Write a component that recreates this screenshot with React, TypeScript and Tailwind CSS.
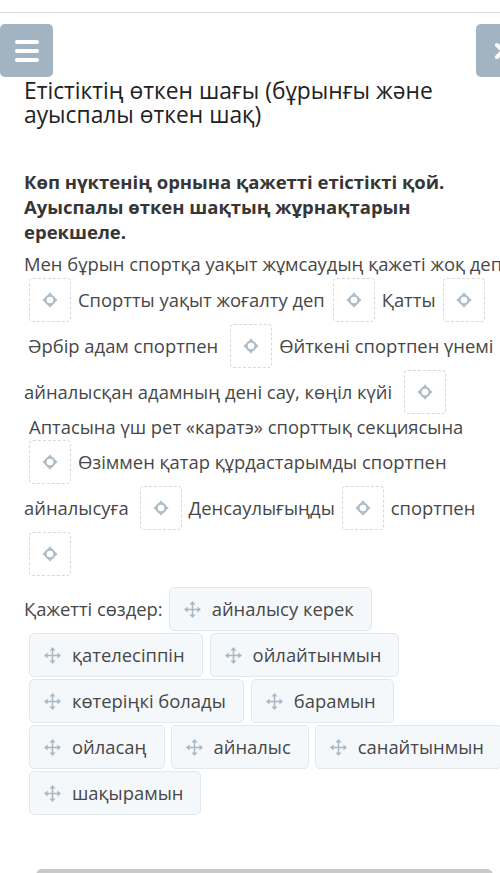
import React from 'react';

const MoveIcon = () => (
  <svg width="17" height="17" viewBox="0 0 17 17" fill="#a9b8c4">
    <rect x="7.75" y="3" width="1.5" height="11" />
    <rect x="3" y="7.75" width="11" height="1.5" />
    <polygon points="8.5,0 11.6,3.6 5.4,3.6" />
    <polygon points="8.5,17 11.6,13.4 5.4,13.4" />
    <polygon points="0,8.5 3.6,5.4 3.6,11.6" />
    <polygon points="17,8.5 13.4,5.4 13.4,11.6" />
  </svg>
);

const TargetIcon = () => (
  <svg width="16" height="16" viewBox="0 0 16 16" fill="#aebdc8">
    <circle cx="8" cy="8" r="4.4" fill="none" stroke="#aebdc8" strokeWidth="2.2" />
    <polygon points="8,0.3 10.6,3.4 5.4,3.4" />
    <polygon points="8,15.7 10.6,12.6 5.4,12.6" />
    <polygon points="0.3,8 3.4,5.4 3.4,10.6" />
    <polygon points="15.7,8 12.6,5.4 12.6,10.6" />
  </svg>
);

const Drop = ({ className = '' }: { className?: string }) => (
  <div
    className={`shrink-0 w-[42px] h-[44px] border border-dashed border-[#d8d8d8] rounded-[4px] flex items-center justify-center ${className}`}
  >
    <TargetIcon />
  </div>
);

const Txt = ({ children, className = '' }: { children: React.ReactNode; className?: string }) => (
  <span className={`shrink-0 whitespace-nowrap ${className}`}>{children}</span>
);

const Chip = ({ word, className = '' }: { word: string; className?: string }) => (
  <div
    className={`shrink-0 h-[44px] flex items-center gap-[11px] pl-[14px] pr-[17px] bg-[#f5f8fb] border border-[#e1e7ec] rounded-[5px] whitespace-nowrap ${className}`}
  >
    <MoveIcon />
    <span>{word}</span>
  </div>
);

const Row = ({ children, h = 'h-[46px]' }: { children: React.ReactNode; h?: string }) => (
  <div className={`flex items-center ${h}`}>{children}</div>
);

export default function App() {
  return (
    <div className="w-[500px] h-[873px] overflow-hidden bg-white font-['Open_Sans',sans-serif]">
      <div className="h-[13px] border-b border-[#dcdcdc]" />

      <div className="flex justify-between mt-[11px]">
        <button className="w-[53px] h-[53px] rounded-[5px] bg-[#a2b4c2] flex flex-col items-center justify-center gap-[5px]">
          <span className="block w-[24px] h-[4px] rounded-full bg-white" />
          <span className="block w-[24px] h-[4px] rounded-full bg-white" />
          <span className="block w-[24px] h-[4px] rounded-full bg-white" />
        </button>
        <button className="w-[53px] h-[53px] -mr-[29px] rounded-[5px] bg-[#a2b4c2] flex items-center justify-center">
          <svg width="18" height="18" viewBox="0 0 18 18">
            <path d="M3 3 L15 15 M15 3 L3 15" stroke="white" strokeWidth="4" strokeLinecap="round" />
          </svg>
        </button>
      </div>

      <div className="pl-[24px]">
        <h1 className="mt-[2px] text-[22.8px] leading-[24px] text-[#222] font-normal">
          Етістіктің өткен шағы (бұрынғы және ауыспалы өткен шақ)
        </h1>

        <p className="mt-[42px] text-[18.5px] leading-[25px] font-bold text-[#363636] pr-[30px]">
          Көп нүктенің орнына қажетті етістікті қой. Ауыспалы өткен шақтың жұрнақтарын ерекшеле.
        </p>

        <div className="mt-[7px] text-[18.4px] text-[#474747]">
          <Row h="h-[26px]">
            <Txt>Мен бұрын спортқа уақыт жұмсаудың қажеті жоқ деп</Txt>
          </Row>
          <Row>
            <Drop className="ml-[5px]" />
            <Txt className="ml-[7px]">Спортты уақыт жоғалту деп</Txt>
            <Drop className="ml-[8px]" />
            <Txt className="ml-[7px]">Қатты</Txt>
            <Drop className="ml-[7px]" />
          </Row>
          <Row>
            <Txt className="ml-[4px]">Әрбір адам спортпен</Txt>
            <Drop className="ml-[12px]" />
            <Txt className="ml-[7px]">Өйткені спортпен үнемі</Txt>
          </Row>
          <Row>
            <Txt>айналысқан адамның дені сау, көңіл күйі</Txt>
            <Drop className="ml-[12px]" />
          </Row>
          <Row h="h-[24px]">
            <Txt className="ml-[5px]">Аптасына үш рет «каратэ» спорттық секциясына</Txt>
          </Row>
          <Row>
            <Drop className="ml-[5px]" />
            <Txt className="ml-[7px]">Өзіммен қатар құрдастарымды спортпен</Txt>
          </Row>
          <Row>
            <Txt>айналысуға</Txt>
            <Drop className="ml-[11px]" />
            <Txt className="ml-[7px]">Денсаулығыңды</Txt>
            <Drop className="ml-[7px]" />
            <Txt className="ml-[7px]">спортпен</Txt>
          </Row>
          <Row>
            <Drop className="ml-[5px]" />
          </Row>
        </div>

        <div className="mt-[9px] text-[18.4px] text-[#474747]">
          <Row>
            <Txt>Қажетті сөздер:</Txt>
            <Chip word="айналысу керек" className="ml-[6px]" />
          </Row>
          <Row>
            <Chip word="қателесіппін" className="ml-[5px]" />
            <Chip word="ойлайтынмын" className="ml-[7px]" />
          </Row>
          <Row>
            <Chip word="көтеріңкі болады" className="ml-[5px]" />
            <Chip word="барамын" className="ml-[7px]" />
          </Row>
          <Row>
            <Chip word="ойласаң" className="ml-[5px]" />
            <Chip word="айналыс" className="ml-[6px]" />
            <Chip word="санайтынмын" className="ml-[6px]" />
          </Row>
          <Row>
            <Chip word="шақырамын" className="ml-[5px]" />
          </Row>
        </div>
      </div>

      <div className="mt-[53px] ml-[36px] w-[457px] h-[40px] rounded-t-[6px] bg-[#c9c9c9]" />
    </div>
  );
}
